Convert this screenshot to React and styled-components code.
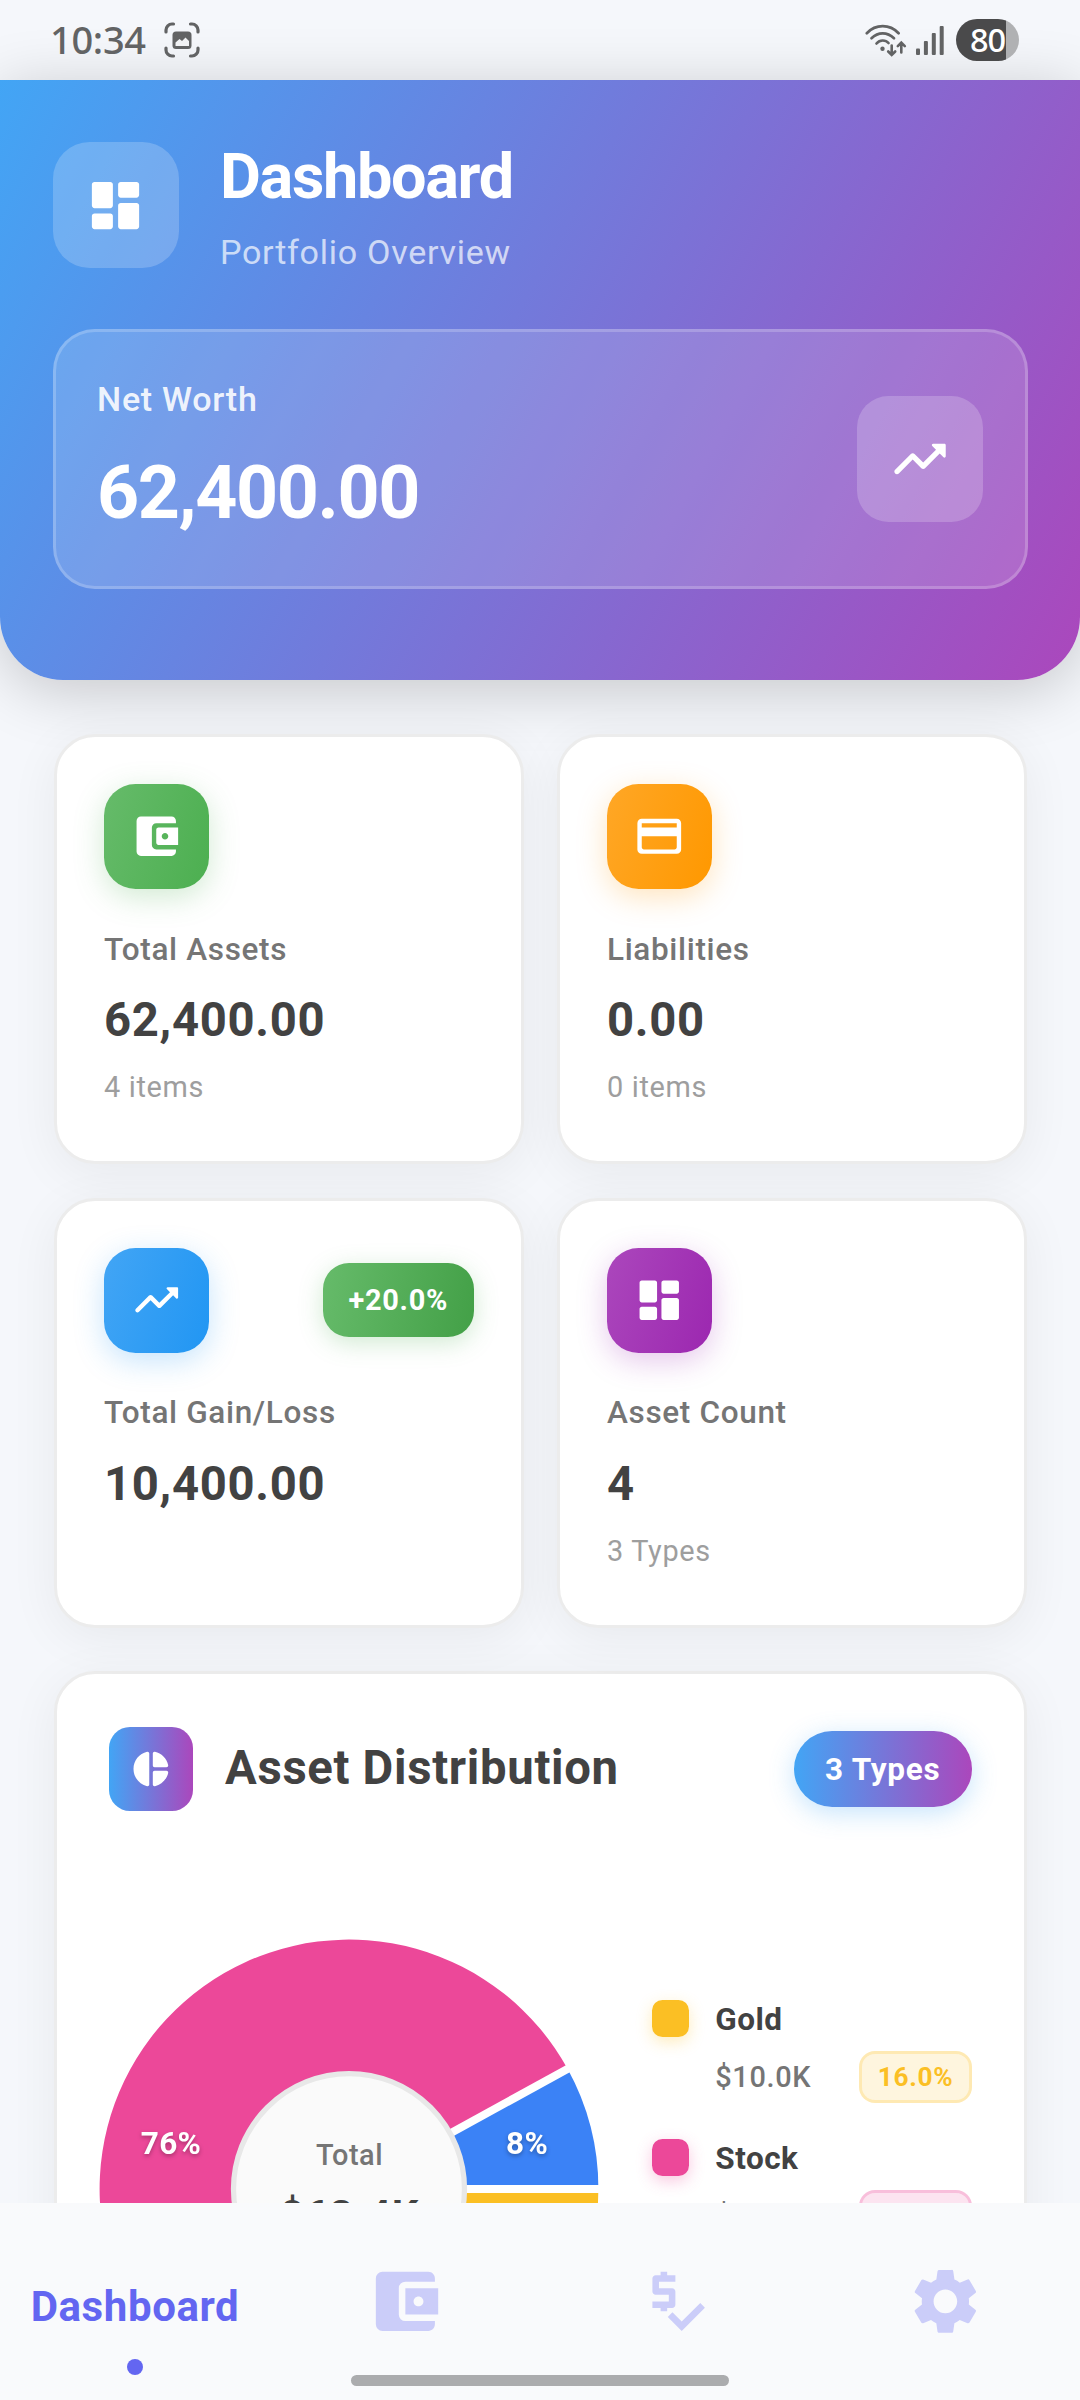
import React from "react";
import styled, { createGlobalStyle } from "styled-components";
import { MdAccountBalanceWallet, MdPriceCheck, MdSettings } from "react-icons/md";

const GlobalStyle = createGlobalStyle`
  *, *::before, *::after { box-sizing: border-box; }
  body { margin: 0; background: #f5f7fb; }
`;

const Screen = styled.div`
  width: 1080px;
  height: 2400px;
  display: flex;
  flex-direction: column;
  overflow: hidden;
  background: #f5f7fb;
  font-family: Roboto, "Liberation Sans", sans-serif;
`;

/* ---------- status bar ---------- */
const StatusBar = styled.div`
  flex: none;
  position: relative;
  z-index: 2;
  height: 80px;
  padding: 0 61px 0 50px;
  display: flex;
  align-items: center;
  color: #626364;
`;
const Clock = styled.span`
  font: 500 38px/50px "Noto Sans", sans-serif;
  letter-spacing: -0.3px;
  width: 114px;
  padding-bottom: 2px;
`;
const StatusIcons = styled.div`
  margin-left: auto;
  display: flex;
  align-items: center;
`;
const Battery = styled.div`
  width: 63px;
  height: 42px;
  margin-left: 12px;
  border-radius: 21px;
  background: linear-gradient(90deg, #4a4a4b 50px, #b0b1b3 50px);
  color: #fff;
  font: 500 32.5px/41px "Noto Sans", sans-serif;
  letter-spacing: -1px;
  padding-left: 14px;
`;

/* ---------- header ---------- */
const Header = styled.header`
  flex: none;
  height: 600px;
  padding: 58px 52.5px 0;
  border-radius: 0 0 63px 63px;
  background: linear-gradient(119.05deg, #42a5f5, #ab47bc);
  box-shadow: 0 10px 63px rgba(0, 0, 0, 0.2);
  color: #fff;
`;
const TitleRow = styled.div`
  display: flex;
  align-items: center;
  gap: 41.5px;
  height: 134px;
`;
const GlassIcon = styled.div`
  flex: none;
  width: 126px;
  height: 126px;
  border-radius: ${(p) => p.$radius}px;
  background: rgba(255, 255, 255, 0.2);
  display: flex;
  align-items: center;
  justify-content: center;
`;
const Title = styled.h1`
  margin: 0 0 18px;
  font-size: 63px;
  line-height: 75px;
  font-weight: 700;
  letter-spacing: -1.35px;
`;
const Subtitle = styled.p`
  margin: 0;
  font-size: 34.1px;
  line-height: 40px;
  letter-spacing: 0.7px;
  color: rgba(255, 255, 255, 0.7);
`;
const NetCard = styled.section`
  margin-top: 57px;
  height: 260px;
  padding: 0 42px 0 41.5px;
  border: 3px solid rgba(255, 255, 255, 0.2);
  border-radius: 42px;
  background: rgba(255, 255, 255, 0.15);
  display: flex;
  align-items: center;
  justify-content: space-between;
`;
const NetLabel = styled.div`
  margin-bottom: 31px;
  font-size: 34.1px;
  line-height: 40px;
  font-weight: 500;
  letter-spacing: 0.7px;
  color: rgba(255, 255, 255, 0.9);
`;
const NetValue = styled.div`
  padding-bottom: 4px;
  font-size: 73.5px;
  line-height: 86px;
  font-weight: 700;
  letter-spacing: -1.4px;
`;

/* ---------- content ---------- */
const Content = styled.main`
  flex: 1;
  min-height: 0;
  padding: 54px 53px 0 54px;
`;
const Grid = styled.div`
  display: grid;
  grid-template-columns: 1fr 1fr;
  grid-auto-rows: 430px;
  column-gap: 33px;
  row-gap: 33.5px;
`;
const Card = styled.section`
  border: 3px solid #ececec;
  border-radius: 41px;
  background: #fff;
  box-shadow: 0 10px 50px rgba(0, 0, 0, 0.06);
`;
const StatCard = styled(Card)`
  padding: 47px;
`;
const StatTop = styled.div`
  display: flex;
  align-items: center;
  justify-content: space-between;
  height: 105px;
`;
const StatIcon = styled.div`
  width: 105px;
  height: 105px;
  border-radius: 31.5px;
  background: linear-gradient(108deg, ${(p) => p.$from}, ${(p) => p.$to});
  box-shadow: 0 8px 30px ${(p) => p.$to}42;
  display: flex;
  align-items: center;
  justify-content: center;
`;
const GainBadge = styled.span`
  height: 74px;
  padding: 0 26px;
  border-radius: 26px;
  background: linear-gradient(100deg, #66bb6a, #43a047);
  box-shadow: 0 6px 24px rgba(76, 175, 80, 0.26);
  color: #fff;
  font-size: 28.9px;
  line-height: 75px;
  font-weight: 700;
  letter-spacing: 0.7px;
`;
const StatLabel = styled.div`
  margin-top: 41.5px;
  font-size: 31.5px;
  line-height: 37px;
  font-weight: 500;
  letter-spacing: 0.66px;
  color: #757575;
`;
const StatValue = styled.div`
  margin-top: 24.5px;
  font-size: 47.25px;
  line-height: 56px;
  font-weight: 700;
  letter-spacing: 0.7px;
  color: #424242;
`;
const StatSub = styled.div`
  margin-top: 22px;
  font-size: 28.9px;
  line-height: 34px;
  letter-spacing: 0.68px;
  color: #9e9e9e;
`;

/* ---------- distribution ---------- */
const DistCard = styled(Card)`
  margin-top: 43.5px;
  height: 858px;
  padding: 52px 52px 0 52px;
`;
const DistHead = styled.div`
  display: flex;
  align-items: center;
  height: 85px;
`;
const DistIcon = styled.div`
  width: 84px;
  height: 84px;
  border-radius: 21px;
  background: linear-gradient(90deg, #42a5f5, #ab47bc);
  display: flex;
  align-items: center;
  justify-content: center;
`;
const DistTitle = styled.h2`
  flex: 1;
  margin: -1px 0 0 32px;
  font-size: 47.25px;
  line-height: 56px;
  font-weight: 700;
  letter-spacing: 0.68px;
  color: #424242;
`;
const TypesChip = styled.span`
  height: 76px;
  padding: 0 31.5px;
  border-radius: 39px;
  background: linear-gradient(90deg, #42a5f5, #ab47bc);
  box-shadow: 0 6px 26px rgba(66, 165, 245, 0.3);
  color: #fff;
  font-size: 31.5px;
  line-height: 77px;
  font-weight: 700;
  letter-spacing: 0.75px;
`;
const ChartRow = styled.div`
  margin-top: 137.5px;
  display: flex;
  gap: 63px;
`;
const Donut = styled.svg`
  flex: none;
  width: 480px;
  height: 480px;
  overflow: visible;
  font-family: Roboto, "Liberation Sans", sans-serif;
  text-anchor: middle;
`;
const SliceText = styled.text`
  font-size: 31.5px;
  font-weight: 700;
  letter-spacing: 0.3px;
  fill: #fff;
  filter: drop-shadow(0 2px 2px rgba(0, 0, 0, 0.3));
`;
const Legend = styled.div`
  flex: 1;
  padding-top: 52px;
  display: flex;
  flex-direction: column;
  gap: 36.5px;
`;
const LegendItem = styled.div`
  display: grid;
  grid-template-columns: 37px 1fr auto;
  grid-template-rows: 37px 52px;
  row-gap: 13.5px;
  column-gap: 26.25px;
  align-items: center;
`;
const Swatch = styled.i`
  width: 37px;
  height: 37px;
  margin-top: -2px;
  border-radius: 10.5px;
  background: ${(p) => p.$color};
  box-shadow: 0 5px 16px ${(p) => p.$color}4d;
`;
const LegendName = styled.div`
  grid-column: 2 / 4;
  font-size: 31.5px;
  line-height: 37px;
  font-weight: 700;
  letter-spacing: 0.5px;
  color: #424242;
`;
const LegendValue = styled.div`
  grid-column: 2;
  font-size: 28.9px;
  line-height: 34px;
  font-weight: 500;
  letter-spacing: 0.65px;
  color: #757575;
`;
const LegendPct = styled.div`
  height: 52px;
  padding: 0 15.75px;
  border: 3px solid ${(p) => p.$color}59;
  border-radius: 16px;
  background: ${(p) => p.$color}26;
  background-clip: padding-box;
  color: ${(p) => p.$color};
  font-size: 26.25px;
  line-height: 47px;
  font-weight: 700;
  letter-spacing: 0.65px;
`;

/* ---------- navigation ---------- */
const Nav = styled.nav`
  flex: none;
  position: relative;
  z-index: 1;
  height: 197px;
  display: grid;
  grid-template-columns: repeat(4, 1fr);
  background: #f9fafc;
`;
const NavItem = styled.div`
  display: flex;
  flex-direction: column;
  align-items: center;
  padding-top: 59px;
  color: #cbcdf9;
`;
const NavActive = styled(NavItem)`
  padding-top: 79px;
  color: #6366f1;
  font-size: 42px;
  line-height: 50px;
  font-weight: 700;
  letter-spacing: 0.6px;
`;
const NavDot = styled.i`
  width: 16px;
  height: 16px;
  margin-top: 27px;
  border-radius: 50%;
  background: #6366f1;
`;
const HomeBar = styled.i`
  position: absolute;
  left: 351px;
  bottom: 14px;
  width: 378px;
  height: 11px;
  border-radius: 6px;
  background: #abacae;
`;

const ICONS = {
  dashboard:
    "M4 13h6c.55 0 1-.45 1-1V4c0-.55-.45-1-1-1H4c-.55 0-1 .45-1 1v8c0 .55.45 1 1 1zm0 8h6c.55 0 1-.45 1-1v-4c0-.55-.45-1-1-1H4c-.55 0-1 .45-1 1v4c0 .55.45 1 1 1zm10 0h6c.55 0 1-.45 1-1v-8c0-.55-.45-1-1-1h-6c-.55 0-1 .45-1 1v8c0 .55.45 1 1 1zM13 4v4c0 .55.45 1 1 1h6c.55 0 1-.45 1-1V4c0-.55-.45-1-1-1h-6c-.55 0-1 .45-1 1z",
  trend:
    "m16.85 6.85 1.44 1.44-4.88 4.88-3.29-3.29c-.39-.39-1.02-.39-1.41 0l-6 6.01c-.39.39-.39 1.02 0 1.41.39.39 1.02.39 1.41 0L9.41 12l3.29 3.29c.39.39 1.02.39 1.41 0l5.59-5.58 1.44 1.44c.31.31.85.09.85-.35V6.5c.01-.28-.21-.5-.49-.5h-4.29c-.45 0-.67.54-.36.85z",
  wallet:
    "M10 16V8c0-1.1.89-2 2-2h9V5c0-1.1-.9-2-2-2H5c-1.11 0-2 .9-2 2v14c0 1.1.89 2 2 2h14c1.1 0 2-.9 2-2v-1h-9c-1.11 0-2-.9-2-2zm3-8c-.55 0-1 .45-1 1v6c0 .55.45 1 1 1h9V8h-9zm3 5.5c-.83 0-1.5-.67-1.5-1.5s.67-1.5 1.5-1.5 1.5.67 1.5 1.5-.67 1.5-1.5 1.5z",
  card:
    "M20 4H4c-1.11 0-1.99.89-1.99 2L2 18c0 1.11.89 2 2 2h16c1.11 0 2-.89 2-2V6c0-1.11-.89-2-2-2zm-1 14H5c-.55 0-1-.45-1-1v-5h16v5c0 .55-.45 1-1 1zm1-10H4V6h16v2z",
  pie:
    "M11 3.18v17.64c0 .64-.59 1.12-1.21.98C5.32 20.8 2 16.79 2 12s3.32-8.8 7.79-9.8c.62-.14 1.21.34 1.21.98zm2.03 0v6.81c0 .55.45 1 1 1h6.79c.64 0 1.12-.59.98-1.22-.85-3.76-3.8-6.72-7.55-7.57-.63-.14-1.22.34-1.22.98zm0 10.83v6.81c0 .64.59 1.12 1.22.98 3.76-.85 6.71-3.82 7.56-7.58.14-.62-.35-1.22-.98-1.22h-6.79c-.56.01-1.01.46-1.01 1.01z",
};

const Icon = ({ name, size }) => (
  <svg width={size} height={size} viewBox="0 0 24 24" fill="#fff">
    <path d={ICONS[name]} />
  </svg>
);

const STATS = [
  { icon: "wallet", from: "#66bb6a", to: "#4caf50", label: "Total Assets", value: "62,400.00", sub: "4 items" },
  { icon: "card", from: "#ffa726", to: "#ff9800", label: "Liabilities", value: "0.00", sub: "0 items" },
  { icon: "trend", from: "#42a5f5", to: "#2196f3", label: "Total Gain/Loss", value: "10,400.00", badge: "+20.0%" },
  { icon: "dashboard", from: "#ab47bc", to: "#9c27b0", label: "Asset Count", value: "4", sub: "3 Types" },
];

const LEGEND = [
  { name: "Gold", value: "$10.0K", pct: "16.0%", color: "#fbbf24" },
  { name: "Stock", value: "$47.4K", pct: "76.0%", color: "#ec4899" },
];

const SLICES = [
  { share: 16, color: "#fbbf24" },
  { share: 76, color: "#ec4899" },
  { share: 8, color: "#3b82f6" },
];

const point = (r, share) => {
  const a = (share / 100) * Math.PI * 2;
  return [240 + r * Math.cos(a), 240 + r * Math.sin(a)];
};

function DonutChart() {
  let start = 0;
  const parts = SLICES.map((s) => {
    const from = start;
    start += s.share;
    return { ...s, from, to: start };
  });
  return (
    <Donut viewBox="0 0 480 480">
      {parts.map((s) => (
        <path
          key={s.color}
          fill={s.color}
          d={`M240 240L${point(249.4, s.from).join(" ")}A249.4 249.4 0 ${s.share > 50 ? 1 : 0} 1 ${point(249.4, s.to).join(" ")}Z`}
        />
      ))}
      {parts.map((s) => {
        const [x, y] = point(255, s.from);
        return <line key={s.color} x1="240" y1="240" x2={x} y2={y} stroke="#fff" strokeWidth="8" />;
      })}
      <circle cx="240" cy="240" r="115.5" fill="#fafafa" stroke="#e8e8e8" strokeWidth="5.25" />
      <SliceText x="62" y="205">76%</SliceText>
      <SliceText x="418" y="205">8%</SliceText>
      <text x="240.5" y="216" fontSize="28.9" fontWeight="500" letterSpacing="0.5" fill="#757575">Total</text>
      <text x="240.5" y="281" fontSize="42" fontWeight="700" letterSpacing="0.7" fill="#424242">$62.4K</text>
    </Donut>
  );
}

const CaptureIcon = () => (
  <svg width="36" height="36" viewBox="0 0 36 36" fill="none">
    <path
      d="M2 10V8a6 6 0 0 1 6-6h1.500M26.500 2H28a6 6 0 0 1 6 6v2M34 26v2a6 6 0 0 1-6 6h-1.500M9.500 34H8a6 6 0 0 1-6-6v-2"
      stroke="#626364" strokeWidth="3.200" strokeLinecap="round"
    />
    <rect x="8.500" y="9.500" width="19" height="17.500" rx="3.500" fill="#626364" />
    <path d="M11.500 24v-3.500l4-3.500 2.500 2 3.500-3.500 3.500 3.500v5z" fill="#f1f2f4" />
  </svg>
);

const WifiIcon = () => (
  <svg width="42" height="34" viewBox="0 0 42 34" fill="none" stroke="#626364" strokeLinecap="round">
    <g strokeWidth="2.700">
      <path d="M1.800 10.200Q8.500 3.200 17.700 3.200T33.600 10.200" />
      <path d="M6.500 15.300Q11.500 10.300 17.700 10.300T29 15.300" />
      <path d="M11.500 20.500Q14 17.500 17.700 17.500T23.500 20" />
    </g>
    <circle cx="17.500" cy="25.800" r="2.200" fill="#626364" stroke="none" />
    <path d="M26.700 22.500v9M23.200 28.500l3.500 3.500 3.500-3.500M36.300 29.500v-9M32.800 23.200l3.500-3.500 3.500 3.500" strokeWidth="2.600" />
  </svg>
);

const SignalIcon = () => (
  <svg width="28" height="30" viewBox="0 0 28 30" fill="#626364">
    <rect x="0" y="23.500" width="4" height="6.500" rx="1" />
    <rect x="7.900" y="16" width="4" height="14" rx="1" />
    <rect x="15.800" y="8" width="4" height="22" rx="1" />
    <rect x="23.700" y="1" width="4" height="29" rx="1" />
  </svg>
);

const WifiSlot = styled.span`
  display: flex;
  margin-right: 9.5px;
`;

export default function App() {
  return (
    <Screen>
      <GlobalStyle />
      <StatusBar>
        <Clock>10:34</Clock>
        <CaptureIcon />
        <StatusIcons>
          <WifiSlot><WifiIcon /></WifiSlot>
          <SignalIcon />
          <Battery>80</Battery>
        </StatusIcons>
      </StatusBar>

      <Header>
        <TitleRow>
          <GlassIcon $radius={36.75}><Icon name="dashboard" size={63} /></GlassIcon>
          <div>
            <Title>Dashboard</Title>
            <Subtitle>Portfolio Overview</Subtitle>
          </div>
        </TitleRow>
        <NetCard>
          <div>
            <NetLabel>Net Worth</NetLabel>
            <NetValue>62,400.00</NetValue>
          </div>
          <GlassIcon $radius={31.5}><Icon name="trend" size={63} /></GlassIcon>
        </NetCard>
      </Header>

      <Content>
        <Grid>
          {STATS.map((s) => (
            <StatCard key={s.label}>
              <StatTop>
                <StatIcon $from={s.from} $to={s.to}><Icon name={s.icon} size={52.5} /></StatIcon>
                {s.badge && <GainBadge>{s.badge}</GainBadge>}
              </StatTop>
              <StatLabel>{s.label}</StatLabel>
              <StatValue>{s.value}</StatValue>
              {s.sub && <StatSub>{s.sub}</StatSub>}
            </StatCard>
          ))}
        </Grid>

        <DistCard>
          <DistHead>
            <DistIcon><Icon name="pie" size={42} /></DistIcon>
            <DistTitle>Asset Distribution</DistTitle>
            <TypesChip>3 Types</TypesChip>
          </DistHead>
          <ChartRow>
            <DonutChart />
            <Legend>
              {LEGEND.map((l) => (
                <LegendItem key={l.name}>
                  <Swatch $color={l.color} />
                  <LegendName>{l.name}</LegendName>
                  <LegendValue>{l.value}</LegendValue>
                  <LegendPct $color={l.color}>{l.pct}</LegendPct>
                </LegendItem>
              ))}
            </Legend>
          </ChartRow>
        </DistCard>
      </Content>

      <Nav>
        <NavActive>
          Dashboard
          <NavDot />
        </NavActive>
        <NavItem><MdAccountBalanceWallet size={78.75} /></NavItem>
        <NavItem><MdPriceCheck size={78.75} /></NavItem>
        <NavItem><MdSettings size={78.75} /></NavItem>
        <HomeBar />
      </Nav>
    </Screen>
  );
}
